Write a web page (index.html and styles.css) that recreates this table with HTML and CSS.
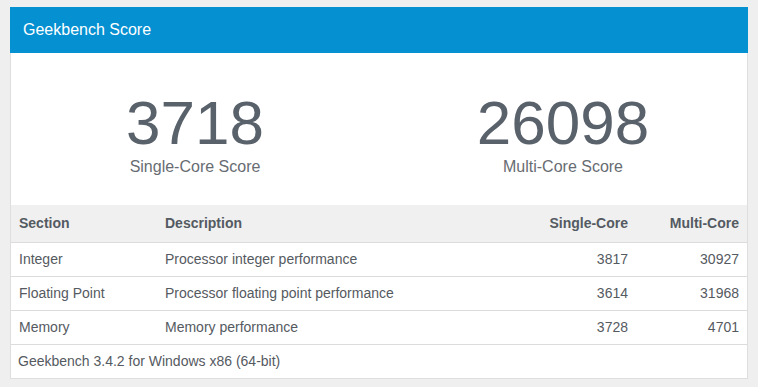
FILE: index.html
```html
<!DOCTYPE html>
<html>
<head>
<meta charset="utf-8">
<link rel="stylesheet" href="styles.css">
</head>
<body>
<div class="card">
  <div class="card-header">Geekbench Score</div>
  <div class="scores">
    <div class="score">
      <div class="score-value">3718</div>
      <div class="score-label">Single-Core Score</div>
    </div>
    <div class="score">
      <div class="score-value">26098</div>
      <div class="score-label">Multi-Core Score</div>
    </div>
  </div>
  <table class="results">
    <thead>
      <tr>
        <th class="col-section">Section</th>
        <th class="col-desc">Description</th>
        <th class="col-num col-single">Single-Core</th>
        <th class="col-num col-multi">Multi-Core</th>
      </tr>
    </thead>
    <tbody>
      <tr>
        <td>Integer</td>
        <td>Processor integer performance</td>
        <td class="col-num">3817</td>
        <td class="col-num">30927</td>
      </tr>
      <tr>
        <td>Floating Point</td>
        <td>Processor floating point performance</td>
        <td class="col-num">3614</td>
        <td class="col-num">31968</td>
      </tr>
      <tr>
        <td>Memory</td>
        <td>Memory performance</td>
        <td class="col-num">3728</td>
        <td class="col-num">4701</td>
      </tr>
    </tbody>
  </table>
  <div class="card-footer">Geekbench 3.4.2 for Windows x86 (64-bit)</div>
</div>
</body>
</html>
```
FILE: styles.css
```css
html, body {
  margin: 0;
  padding: 0;
  background: #efefef;
}
body {
  padding: 7px 10px;
  font-family: "Liberation Sans", Arial, sans-serif;
  color: #555a61;
}
.card {
  background: #fff;
  border: 1px solid #dedede;
  border-top: none;
  width: 738px;
  box-sizing: border-box;
}
.card-header {
  background: #0590d2;
  color: #fff;
  height: 46px;
  margin: 0 -1px;
  padding: 0 0 0 13px;
  font-size: 16px;
  line-height: 46px;
}
.scores {
  display: flex;
  padding: 36px 0 30px;
}
.score {
  flex: 1;
  text-align: center;
}
.score-value {
  font-size: 62px;
  line-height: 68px;
  color: #59616b;
}
.score-label {
  margin-top: 1px;
  font-size: 16px;
  line-height: 17px;
  color: #676c72;
}
.results {
  width: 100%;
  border-collapse: collapse;
  font-size: 14px;
  line-height: 17px;
}
.results th {
  background: #f0f0f0;
  font-weight: bold;
  text-align: left;
  padding: 10px 8px;
  color: #545a62;
  border-bottom: 1px solid #dcdcdc;
}
.results td {
  padding: 8px 8px;
  border-bottom: 1px solid #dcdcdc;
  color: #555a61;
}
.results .col-num {
  text-align: right;
}
.col-section {
  width: 130px;
}
.col-multi {
  width: 95px;
}
.card-footer {
  padding: 8px 7px;
  font-size: 14px;
  line-height: 17px;
  color: #555a61;
}
```
